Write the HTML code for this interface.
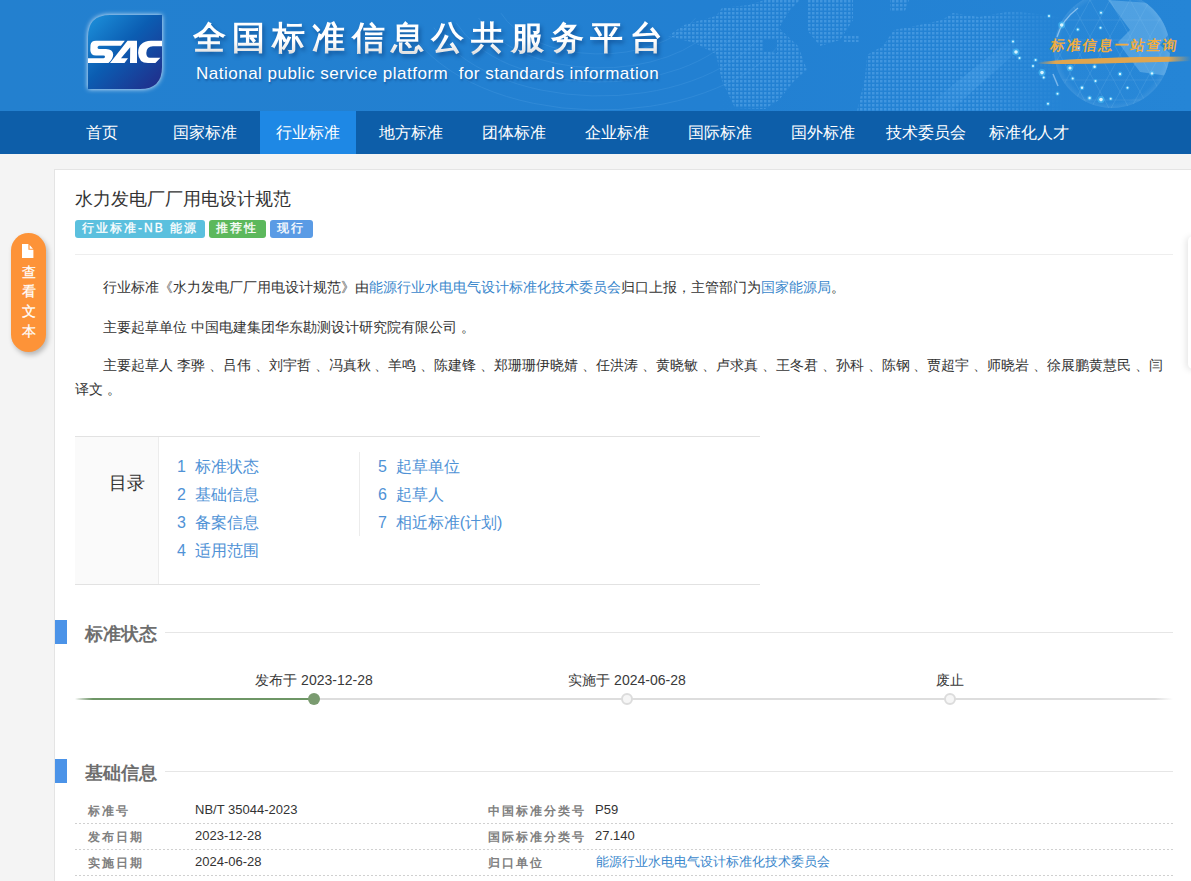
<!DOCTYPE html>
<html><head><meta charset="utf-8">
<style>
*{box-sizing:border-box;margin:0;padding:0}
html,body{width:1191px;height:881px;overflow:hidden}
body{position:relative;background:#f4f4f4;font-family:"Liberation Sans",sans-serif;color:#333}
.abs{position:absolute}
#banner{left:0;top:0;width:1191px;height:111px;background:linear-gradient(90deg,#2380cf 0%,#2280d2 60%,#2585d6 100%);overflow:hidden}
#nav{left:0;top:111px;width:1191px;height:43px;background:#0d5ea9}
.ni{position:absolute;top:0;height:43px;width:96px;text-align:center;line-height:43px;font-size:16px;color:#fff}
.ni.act{background:#1e88e5}
#card{left:54px;top:169px;width:1200px;height:800px;background:#fff;border:1px solid #e4e4e4}
#side{left:11px;top:233px;width:35px;height:119px;border-radius:18px;background:#fd9338;box-shadow:2px 3px 5px rgba(0,0,0,.25)}
.title{left:75px;top:185px;font-size:18px;line-height:28px;color:#333;white-space:nowrap}
.badge{position:absolute;top:220px;height:18px;line-height:16px;border-radius:3px;color:#fff;font-size:12px;font-weight:500;letter-spacing:2px;padding-left:7px;-webkit-text-stroke:.3px #fff;white-space:nowrap}
.hr{height:1px;background:#eee}
.p{left:75px;font-size:14px;line-height:24px;color:#333;white-space:nowrap}
a{color:#3a87cc;text-decoration:none}
.toc a{color:#4f92d6}
.sechead{position:absolute;left:55px;width:12px;height:24px;background:#4b93e8}
.sectitle{position:absolute;left:85px;margin-top:1.5px;font-size:18px;font-weight:bold;color:#6e6e6e;line-height:24px;white-space:nowrap}
.secline{position:absolute;left:165px;width:1008px;height:1px;background:#e6e6e6}
.row{position:absolute;left:75px;width:1098px;height:1px;background:repeating-linear-gradient(90deg,#d0d0d0 0 2px,transparent 2px 4px)}
.lab{position:absolute;font-size:12px;font-weight:bold;color:#808080;letter-spacing:2px;white-space:nowrap;line-height:16px;margin-top:1px}
.val{position:absolute;font-size:13px;color:#333;white-space:nowrap;line-height:16px}
</style></head><body>
<div id="banner" class="abs">
 <svg class="abs" style="left:0;top:0" width="1191" height="111" viewBox="0 0 1191 111">
  <defs>
   <pattern id="dots" width="4" height="4" patternUnits="userSpaceOnUse"><rect width="2.5" height="2.5" fill="#5aa8ea"/></pattern>
   <radialGradient id="globe" cx="0.5" cy="0.5" r="0.5">
    <stop offset="0" stop-color="#2f90dc" stop-opacity=".15"/>
    <stop offset=".9" stop-color="#3a98e2" stop-opacity=".15"/>
    <stop offset="1" stop-color="#9ccff4" stop-opacity=".18"/>
   </radialGradient>
   <linearGradient id="gold" x1="0" x2="1">
    <stop offset="0" stop-color="#e5a548" stop-opacity="0"/>
    <stop offset=".12" stop-color="#e0a54e"/>
    <stop offset=".85" stop-color="#e0a54e"/>
    <stop offset="1" stop-color="#e0a54e" stop-opacity="0"/>
   </linearGradient>
   <linearGradient id="streak" x1="0" y1="1" x2="1" y2="0">
    <stop offset="0" stop-color="#5fb0f0" stop-opacity="0"/>
    <stop offset=".5" stop-color="#5fb0f0" stop-opacity=".25"/>
    <stop offset="1" stop-color="#5fb0f0" stop-opacity="0"/>
   </linearGradient>
   <filter id="bl"><feGaussianBlur stdDeviation="1"/></filter>
   <linearGradient id="fadeg" x1="857" x2="1065" gradientUnits="userSpaceOnUse"><stop offset="0" stop-color="#fff"/><stop offset=".6" stop-color="#fff"/><stop offset="1" stop-color="#fff" stop-opacity="0"/></linearGradient>
   <mask id="fade"><rect x="850" y="0" width="230" height="111" fill="url(#fadeg)"/></mask>
   <filter id="bl2"><feGaussianBlur stdDeviation=".6"/></filter>
   <clipPath id="gc"><circle cx="1112" cy="50" r="58"/></clipPath>
  </defs>
  <g fill="none" stroke="#5eaaea" stroke-width="1" opacity=".22">
   <path d="M501.0 13.2 A105.4 62 0 0 0 695.5 18.2"/><path d="M478.6 18.0 A129.2 76 0 0 0 717.1 24.1"/><path d="M456.2 22.8 A153.0 90 0 0 0 738.7 30.0"/><path d="M433.9 27.6 A176.8 104 0 0 0 760.2 36.0"/><path d="M411.5 32.4 A200.6 118 0 0 0 781.8 41.9"/>
  </g>
  <g fill="url(#dots)" opacity=".55" fill-rule="evenodd">
   <path d="M668 36 L684 25 L716 16 L722 8 L749 5 L765 0 L800 0 L790 10 L779 28 L798 46 L807 70 L795 80 L779 100 L765 109 L735 108 L722 81 L716 54 L695 43 Z M764 40 L777 40 L777 53 L764 51 Z"/>
   <path d="M807 0 L853 0 L853 20 L840 40 L820 46 L807 30 Z"/>
   <path d="M844 35 L859 35 L859 42 L844 42 Z"/>
   <path mask="url(#fade)" d="M857 111 L865 78 L867 55 L883 46 L894 30 L915 26 L942 20 L953 13 L979 17 L1012 11 L1046 15 L1075 20 L1075 111 Z"/>
   <path d="M890 0 L909 0 L905 11 L890 11 Z"/>
  </g>
  <path d="M920 111 L1010 40 L1030 40 L950 111 Z" fill="url(#streak)"/>
  <circle cx="1112" cy="50" r="58" fill="url(#globe)"/>
  <g clip-path="url(#gc)" stroke="#8cc8f2" stroke-width=".6" fill="none" opacity=".3">
   <path d="M1040 20 L1190 20 M1040 40 L1190 40 M1040 60 L1190 60 M1040 80 L1190 80 M1040 100 L1190 100"/>
   <path d="M1050 110 L1110 0 M1070 110 L1130 0 M1090 110 L1150 0 M1110 110 L1170 0 M1130 110 L1190 0 M1030 110 L1090 0"/>
   <path d="M1050 0 L1110 110 M1070 0 L1130 110 M1090 0 L1150 110 M1110 0 L1170 110 M1030 0 L1090 110 M1130 0 L1190 110"/>
  </g>
  <g clip-path="url(#gc)" fill="#9ad0f5" opacity=".35"><path d="M1108 0 L1150 3 L1172 30 L1160 45 L1176 58 L1168 76 L1140 72 L1128 56 L1118 42 L1130 30 Z"/></g>
  <path d="M1057 37 Q1062 20 1078 8" stroke="#cfe9ff" stroke-width="1.3" fill="none" opacity=".55" filter="url(#bl2)"/>
  <path d="M1053 74 L1058 86" stroke="#cfe9ff" stroke-width="1.5" fill="none" opacity=".5" filter="url(#bl2)"/>
  <g filter="url(#bl2)"><circle cx="1013" cy="41.5" r="1.9" fill="#52d0ff" opacity=".45"/><circle cx="1013" cy="41.5" r="1.0" fill="#d8f4ff"/><circle cx="1016" cy="52" r="3.5" fill="#52d0ff" opacity=".45"/><circle cx="1016" cy="52" r="1.8" fill="#d8f4ff"/><circle cx="1019.5" cy="58" r="1.9" fill="#52d0ff" opacity=".45"/><circle cx="1019.5" cy="58" r="1.0" fill="#d8f4ff"/><circle cx="1035.6" cy="60" r="2.1" fill="#52d0ff" opacity=".45"/><circle cx="1035.6" cy="60" r="1.0" fill="#d8f4ff"/><circle cx="1033" cy="66" r="1.9" fill="#52d0ff" opacity=".45"/><circle cx="1033" cy="66" r="1.0" fill="#d8f4ff"/><circle cx="1042" cy="72.6" r="3.5" fill="#52d0ff" opacity=".45"/><circle cx="1042" cy="72.6" r="1.8" fill="#d8f4ff"/><circle cx="1043.7" cy="77.6" r="1.9" fill="#52d0ff" opacity=".45"/><circle cx="1043.7" cy="77.6" r="1.0" fill="#d8f4ff"/><circle cx="1057.5" cy="93.7" r="2.1" fill="#52d0ff" opacity=".45"/><circle cx="1057.5" cy="93.7" r="1.0" fill="#d8f4ff"/><circle cx="1048" cy="103.8" r="2.1" fill="#52d0ff" opacity=".45"/><circle cx="1048" cy="103.8" r="1.0" fill="#d8f4ff"/><circle cx="1061.7" cy="25" r="3.5" fill="#52d0ff" opacity=".45"/><circle cx="1061.7" cy="25" r="1.8" fill="#d8f4ff"/><circle cx="1049" cy="16" r="1.9" fill="#52d0ff" opacity=".45"/><circle cx="1049" cy="16" r="1.0" fill="#d8f4ff"/><circle cx="1070" cy="68" r="3.2" fill="#52d0ff" opacity=".45"/><circle cx="1070" cy="68" r="1.6" fill="#d8f4ff"/><circle cx="1077.8" cy="29.5" r="2.1" fill="#52d0ff" opacity=".45"/><circle cx="1077.8" cy="29.5" r="1.0" fill="#d8f4ff"/><circle cx="1094.6" cy="66.7" r="2.4" fill="#52d0ff" opacity=".45"/><circle cx="1094.6" cy="66.7" r="1.2" fill="#d8f4ff"/><circle cx="1100.5" cy="27.8" r="1.9" fill="#52d0ff" opacity=".45"/><circle cx="1100.5" cy="27.8" r="1.0" fill="#d8f4ff"/><circle cx="1072.7" cy="78.5" r="2.1" fill="#52d0ff" opacity=".45"/><circle cx="1072.7" cy="78.5" r="1.0" fill="#d8f4ff"/><circle cx="1082" cy="87.8" r="2.4" fill="#52d0ff" opacity=".45"/><circle cx="1082" cy="87.8" r="1.2" fill="#d8f4ff"/><circle cx="1095.5" cy="81" r="1.9" fill="#52d0ff" opacity=".45"/><circle cx="1095.5" cy="81" r="1.0" fill="#d8f4ff"/><circle cx="1101" cy="99.6" r="3.5" fill="#52d0ff" opacity=".45"/><circle cx="1101" cy="99.6" r="1.8" fill="#d8f4ff"/><circle cx="1089.6" cy="98" r="2.4" fill="#52d0ff" opacity=".45"/><circle cx="1089.6" cy="98" r="1.2" fill="#d8f4ff"/><circle cx="1110.7" cy="98.7" r="1.9" fill="#52d0ff" opacity=".45"/><circle cx="1110.7" cy="98.7" r="1.0" fill="#d8f4ff"/><circle cx="1120" cy="74" r="2.4" fill="#52d0ff" opacity=".45"/><circle cx="1120" cy="74" r="1.2" fill="#d8f4ff"/><circle cx="1127.5" cy="87.8" r="1.9" fill="#52d0ff" opacity=".45"/><circle cx="1127.5" cy="87.8" r="1.0" fill="#d8f4ff"/><circle cx="1152" cy="73.4" r="2.4" fill="#52d0ff" opacity=".45"/><circle cx="1152" cy="73.4" r="1.2" fill="#d8f4ff"/><circle cx="1101" cy="12.7" r="2.1" fill="#52d0ff" opacity=".45"/><circle cx="1101" cy="12.7" r="1.0" fill="#d8f4ff"/><circle cx="1078.6" cy="48" r="1.9" fill="#52d0ff" opacity=".45"/><circle cx="1078.6" cy="48" r="1.0" fill="#d8f4ff"/></g>
  <path d="M1037 62.5 Q1080 57 1191 56.5 L1191 61 Q1090 64.5 1037 64 Z" fill="url(#gold)"/>
 </svg>
 <div class="abs" style="left:1051px;top:37px;font-family:'Liberation Serif',serif;font-size:14px;font-weight:bold;color:#f0ac40;letter-spacing:2px;white-space:nowrap;transform:skewX(-8deg);transform-origin:0 50%">标准信息一站查询</div>
 <svg class="abs" style="left:88px;top:15px;overflow:visible" width="74" height="74" viewBox="88 15 74 74">
  <defs>
   <linearGradient id="lg" x1="0" y1="0" x2="1" y2="1">
    <stop offset="0" stop-color="#1d92dc"/>
    <stop offset=".45" stop-color="#0b5db2"/>
    <stop offset="1" stop-color="#222a88"/>
   </linearGradient>
   <filter id="glow" x="-30%" y="-30%" width="160%" height="160%"><feGaussianBlur stdDeviation="2.5"/></filter>
  </defs>
  <path d="M110 15 H162 V67 Q162 89 140 89 H88 V37 Q88 15 110 15 Z" fill="#fff" filter="url(#glow)" opacity=".9"/>
  <path d="M110 15 H162 V67 Q162 89 140 89 H88 V37 Q88 15 110 15 Z" fill="url(#lg)"/>
  <g fill="#fff">
   <path d="M90.5 45 Q91 40.7 96 40.7 L124.8 40.7 L120.9 45.8 L99 45.8 Q97.5 46.3 97.5 47.5 Q97.5 49.1 99.5 49.1 L106 49.1 Q113 49.5 113.2 54.5 Q113 59 108.5 63.1 L88 63.1 L88 58.2 L103.5 58.2 Q105 58 105 56.7 Q105 55.6 103.5 55.6 L96 55.6 Q90.5 55.5 90.3 50 Z"/>
   <path d="M127.5 40.8 L137 40.8 L137 63 L130 63 L130.2 47.2 L121 58.2 L128 58.2 L124.5 63 L110 63 Z"/>
   <path d="M162 40.8 L151 40.8 Q138 41.5 138.1 53 Q138.5 63 148 63 L155.4 63 L160.4 57.8 L150 57.8 Q146.3 57.5 146.3 53 Q146.5 46.3 153 46.2 L162 46.2 Z"/>
  </g>
 </svg>
 <div class="abs" id="cnt" style="left:192.5px;top:16px;font-size:33px;font-weight:bold;letter-spacing:6.8px;white-space:nowrap;line-height:44px;filter:drop-shadow(2px 3px 2px rgba(0,40,100,.45))"><span style="background:linear-gradient(180deg,#fff 0px,#fff 22px,#d8d8d8 38px);-webkit-background-clip:text;background-clip:text;color:transparent">全国标准信息公共服务平台</span></div>
 <div class="abs" style="left:196px;top:63.3px;font-size:17px;color:#fff;letter-spacing:.5px;white-space:pre;line-height:22px;text-shadow:1px 2px 2px rgba(0,40,100,.35)">National public service platform  for standards information</div>
</div>
<div id="nav" class="abs">
 <div class="ni" style="left:54px">首页</div>
 <div class="ni" style="left:157px">国家标准</div>
 <div class="ni act" style="left:260px">行业标准</div>
 <div class="ni" style="left:363px">地方标准</div>
 <div class="ni" style="left:466px">团体标准</div>
 <div class="ni" style="left:569px">企业标准</div>
 <div class="ni" style="left:672px">国际标准</div>
 <div class="ni" style="left:775px">国外标准</div>
 <div class="ni" style="left:878px">技术委员会</div>
 <div class="ni" style="left:981px">标准化人才</div>
</div>
<div id="card" class="abs"></div>
<div id="side" class="abs">
 <svg class="abs" style="left:11px;top:11px" width="12" height="14" viewBox="0 0 12 14"><path d="M0 0 H6.4 V5.8 H11.4 V14 H0 Z M7.6 1 L11 4.8 H7.6 Z" fill="#fff"/></svg>
 <div class="abs" style="left:10px;top:29.7px;width:15px;font-size:14px;line-height:19.7px;color:#fff;text-align:center;-webkit-text-stroke:.25px #fff">查<br>看<br>文<br>本</div>
</div>

<div class="abs title">水力发电厂厂用电设计规范</div>
<div class="badge" style="left:75px;width:130px;background:#5bc0de">行业标准-NB 能源</div>
<div class="badge" style="left:209px;width:57px;background:#5cb85c">推荐性</div>
<div class="badge" style="left:270px;width:43px;background:#5a9be5">现行</div>
<div class="abs hr" style="left:75px;top:254px;width:1098px"></div>

<div class="abs p" style="top:275px;text-indent:28px">行业标准《水力发电厂厂用电设计规范》由<a>能源行业水电电气设计标准化技术委员会</a>归口上报，主管部门为<a>国家能源局</a>。</div>
<div class="abs p" style="top:315px;text-indent:28px">主要起草单位 中国电建集团华东勘测设计研究院有限公司 。</div>
<div class="abs p" style="top:353px;text-indent:28px">主要起草人 李骅 、吕伟 、刘宇哲 、冯真秋 、羊鸣 、陈建锋 、郑珊珊伊晓婧 、任洪涛 、黄晓敏 、卢求真 、王冬君 、孙科 、陈钢 、贾超宇 、师晓岩 、徐展鹏黄慧民 、闫</div>
<div class="abs p" style="top:377px">译文 。</div>


<div class="abs" style="left:1188px;top:236px;width:20px;height:133px;background:#fff;border-radius:5px;box-shadow:-2px 1px 6px rgba(0,0,0,.10)"></div>

<!-- TOC -->
<div class="abs toc" style="left:75px;top:436px;width:685px;height:149px;border-top:1px solid #e2e2e2;border-bottom:1px solid #e2e2e2">
 <div class="abs" style="left:0;top:0;width:84px;height:147px;background:#fafafa;border-right:1px solid #ececec"></div>
 <div class="abs" style="left:34px;top:34px;font-size:17.5px;line-height:24px;color:#333">目录</div>
 <div class="abs" style="left:284px;top:15px;width:1px;height:84px;background:#ececec"></div>
 <div class="abs" style="left:102px;top:15.5px;font-size:16px;line-height:28px;white-space:nowrap">
  <a>1&nbsp; 标准状态</a><br><a>2&nbsp; 基础信息</a><br><a>3&nbsp; 备案信息</a><br><a>4&nbsp; 适用范围</a>
 </div>
 <div class="abs" style="left:303px;top:15.5px;font-size:16px;line-height:28px;white-space:nowrap">
  <a>5&nbsp; 起草单位</a><br><a>6&nbsp; 起草人</a><br><a>7&nbsp; 相近标准(计划)</a>
 </div>
</div>

<!-- section 1 -->
<div class="sechead" style="top:620px"></div>
<div class="sectitle" style="top:620px">标准状态</div>
<div class="secline" style="top:632px"></div>
<div class="abs" style="left:75px;top:698px;width:1098px;height:2px;background:linear-gradient(90deg,rgba(221,221,221,0) 0,#ddd 18px,#ddd 1080px,rgba(221,221,221,0) 1098px)"></div>
<div class="abs" style="left:75px;top:698px;width:239px;height:2px;background:linear-gradient(90deg,rgba(110,150,100,0) 0,#6e9666 18px)"></div>
<div class="abs" style="left:308px;top:693px;width:12px;height:12px;border-radius:50%;background:#7a9b70"></div>
<div class="abs" style="left:621px;top:693px;width:12px;height:12px;border-radius:50%;background:#f6f6f6;border:2px solid #dcdcdc"></div>
<div class="abs" style="left:944px;top:693px;width:12px;height:12px;border-radius:50%;background:#f6f6f6;border:2px solid #dcdcdc"></div>
<div class="abs" style="left:214px;top:671px;width:200px;text-align:center;font-size:14px;line-height:18px;color:#3a3a3a">发布于 2023-12-28</div>
<div class="abs" style="left:527px;top:671px;width:200px;text-align:center;font-size:14px;line-height:18px;color:#3a3a3a">实施于 2024-06-28</div>
<div class="abs" style="left:850px;top:671px;width:200px;text-align:center;font-size:14px;line-height:18px;color:#3a3a3a">废止</div>

<!-- section 2 -->
<div class="sechead" style="top:759px"></div>
<div class="sectitle" style="top:759px">基础信息</div>
<div class="secline" style="top:771px"></div>
<div class="row" style="top:823px"></div>
<div class="row" style="top:849px"></div>
<div class="row" style="top:875px"></div>
<div class="lab" style="left:88px;top:802px">标准号</div>
<div class="val" style="left:195px;top:802px">NB/T 35044-2023</div>
<div class="lab" style="left:488px;top:802px">中国标准分类号</div>
<div class="val" style="left:595px;top:802px">P59</div>
<div class="lab" style="left:88px;top:828px">发布日期</div>
<div class="val" style="left:195px;top:828px">2023-12-28</div>
<div class="lab" style="left:488px;top:828px">国际标准分类号</div>
<div class="val" style="left:595px;top:828px">27.140</div>
<div class="lab" style="left:88px;top:854px">实施日期</div>
<div class="val" style="left:195px;top:854px">2024-06-28</div>
<div class="lab" style="left:488px;top:854px">归口单位</div>
<div class="val" style="left:596px;top:854px"><a>能源行业水电电气设计标准化技术委员会</a></div>
</body></html>
